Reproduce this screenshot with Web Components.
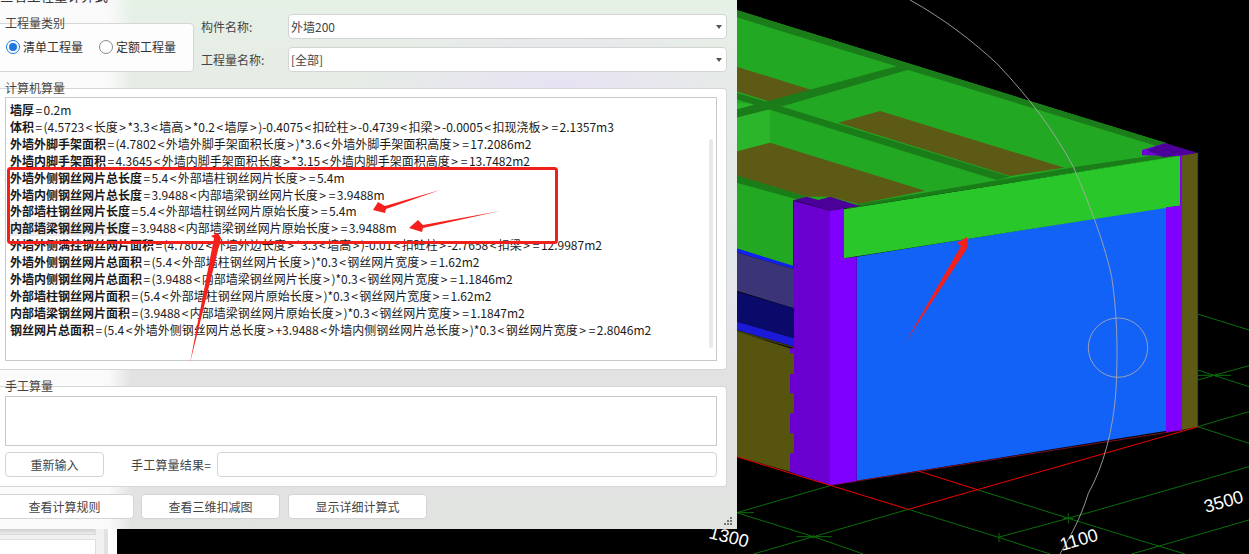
<!DOCTYPE html>
<html lang="zh-CN"><head><meta charset="utf-8"><title>工程量计算式</title>
<style>
html,body{margin:0;padding:0;background:#000}
body{width:1249px;height:554px;overflow:hidden;font:12px "Noto Sans CJK SC","Noto Sans",sans-serif;color:#222}
f-line b{font-weight:700}
f-line b.sel{background:#eeeeee}
f-line u{text-decoration:none;padding:0 1.45px}
</style></head><body>
<app-root>
  <back-panel slot="back"></back-panel>
  <model-scene slot="scene"></model-scene>
  <calc-dialog slot="dialog">
    <f-line><b>墙厚</b>=0.2m</f-line>
    <f-line><b>体积</b>=(4.5723&lt;长度&gt;*3.3&lt;墙高&gt;*0.2&lt;墙厚&gt;)-0.4075&lt;扣砼柱&gt;-0.4739&lt;扣梁&gt;-0.0005&lt;扣现浇板&gt;=2.1357m3</f-line>
    <f-line><b>外墙外脚手架面积</b>=(4.7802&lt;外墙外脚手架面积长度&gt;)*3.6&lt;外墙外脚手架面积高度&gt;=17.2086m2</f-line>
    <f-line><b>外墙内脚手架面积</b>=4.3645&lt;外墙内脚手架面积长度&gt;*3.15&lt;外墙内脚手架面积高度&gt;=13.7482m2</f-line>
    <f-line><b>外墙外侧钢丝网片总长度</b>=5.4&lt;外部墙柱钢丝网片长度&gt;=5.4m</f-line>
    <f-line><b>外墙内侧钢丝网片总长度</b>=3.9488&lt;内部墙梁钢丝网片长度&gt;=3.9488m</f-line>
    <f-line><b>外部墙柱钢丝网片长度</b>=5.4&lt;外部墙柱钢丝网片原始长度&gt;=5.4m</f-line>
    <f-line><b class="sel">内部墙梁钢丝网片长度</b>=3.9488&lt;内部墙梁钢丝网片原始长度&gt;=3.9488m</f-line>
    <f-line><b>外墙外侧满挂钢丝网片面积</b>=(4.7802&lt;外墙外边长度&gt;*3.3&lt;墙高&gt;)-0.01&lt;扣砼柱&gt;-2.7658&lt;扣梁&gt;=12.9987m2</f-line>
    <f-line><b>外墙外侧钢丝网片总面积</b>=(5.4&lt;外部墙柱钢丝网片长度&gt;)*0.3&lt;钢丝网片宽度&gt;=1.62m2</f-line>
    <f-line><b>外墙内侧钢丝网片总面积</b>=(3.9488&lt;内部墙梁钢丝网片长度&gt;)*0.3&lt;钢丝网片宽度&gt;=1.1846m2</f-line>
    <f-line><b>外部墙柱钢丝网片面积</b>=(5.4&lt;外部墙柱钢丝网片原始长度&gt;)*0.3&lt;钢丝网片宽度&gt;=1.62m2</f-line>
    <f-line><b>内部墙梁钢丝网片面积</b>=(3.9488&lt;内部墙梁钢丝网片原始长度&gt;)*0.3&lt;钢丝网片宽度&gt;=1.1847m2</f-line>
    <f-line><b>钢丝网片总面积</b>=(5.4&lt;外墙外侧钢丝网片总长度&gt;+3.9488&lt;外墙内侧钢丝网片总长度&gt;)*0.3&lt;钢丝网片宽度&gt;=2.8046m2</f-line>
  </calc-dialog>
  <red-marks slot="marks"></red-marks>
</app-root>
<script>
function def(name, css, html){
  customElements.define(name, class extends HTMLElement{
    constructor(){super();const r=this.attachShadow({mode:'open'});
      r.innerHTML='<style>'+css+'</style>'+(typeof html==='function'?html(this):html);}
  });
}
document.querySelectorAll('f-line').forEach(l=>{
  [...l.childNodes].filter(n=>n.nodeType===3).forEach(n=>{
    const f=document.createDocumentFragment();
    n.textContent.split(/([<>=])/).forEach(p=>{
      if(!p)return;
      if(/[<>=]/.test(p)){const u=document.createElement('u');u.textContent=p;f.appendChild(u);}
      else f.appendChild(document.createTextNode(p));
    });
    n.replaceWith(f);
  });
});
def('app-root',':host{display:block;position:relative;width:1249px;height:554px;overflow:hidden;background:#000}',
 '<slot name="back"></slot><slot name="scene"></slot><slot name="dialog"></slot><slot name="marks"></slot>');

def('back-panel',`:host{position:absolute;left:0;top:529px;width:117px;height:25px;background:#f1f1f1;display:flex;box-sizing:border-box}
 .l{width:96px;display:flex;flex-direction:column}
 .a{height:5px;border:solid #dadada;border-width:0 1px 1px 0;background:linear-gradient(#cfcfcf,#ececec)}
 .b{flex:1;margin-top:4px;background:#fff;border:solid #dedede;border-width:1px 1px 0 0}
 .g{width:8px}.s{width:4px;background:#e2e2e2}.e{flex:1;background:#fff}`,
 '<div class="l"><div class="a"></div><div class="b"></div></div><div class="g"></div><div class="s"></div><div class="e"></div>');

def('model-scene',':host{position:absolute;inset:0;display:block}svg{display:block}',`
<svg width="1249" height="554" viewBox="0 0 1249 554" xmlns="http://www.w3.org/2000/svg">
<g transform="translate(730 0) scale(.33333)">
 <polygon fill="#23a823" points="0,24 1310,430 1350,470 340,625 190,600 190,800 0,740"/>
 <polygon fill="#2bb52b" points="0,310 60,310 120,330 120,430 20,455 0,455"/>
 <polygon fill="#1a7d1a" points="0,24 1310,430 1280,438 0,46"/>
 <polygon fill="#5c5a14" points="0,194 245,270 120,305 0,268"/>
 <polygon fill="#1a7d1a" points="0,334 505,197 540,208 160,318 0,358"/>
 <polygon fill="#1a7d1a" points="0,272 840,530 800,540 0,292"/>
 <polygon fill="#5c5a14" points="325,368 450,333 1003,503 840,528"/>
 <polygon fill="#5c5a14" points="0,460 120,428 585,572 385,612 300,590 230,590 0,522"/>
 <polygon fill="#1a7d1a" points="0,520 230,590 200,598 0,543"/>
 <polygon fill="#1a7d1a" points="385,612 1040,500 1300,462 1350,467 345,627"/>
 <polygon fill="#1020f0" points="0,739 192,798 192,808 0,751"/>
 <polygon fill="#3b3578" points="0,751 192,808 192,925 0,866"/>
 <polygon fill="#0a0a6a" points="0,869 192,925 192,1015 0,959"/>
 <polygon fill="#1a1ad8" points="0,959 192,1015 192,1040 0,984"/>
 <polygon fill="#3e3c0c" points="0,984 192,1040 192,1045 0,990"/>
 <polygon fill="#1262f8" points="380,770 1310,620 1310,1292 380,1442"/>
 <line x1="300" y1="1456" x2="1356" y2="1290" stroke="#7a0f24" stroke-width="3"/>
 <polygon fill="#6a00d0" points="192,602 300,632 300,1456 180,1416 180,1045 192,1045"/>
 <polygon fill="#7f00ff" points="300,632 342,625 342,775 380,770 380,1443 300,1456"/>
 <polygon fill="#4b0099" points="192,600 230,590 265,600 300,590 390,618 300,632"/>
 <polygon fill="#56540f" points="0,988 180,1045 180,1060 192,1060 192,1122 180,1122 180,1180 192,1180 192,1240 180,1240 180,1300 192,1300 192,1360 180,1360 180,1415 0,1364"/>
 <polygon fill="#29c729" points="342,628 1350,468 1350,617 342,775"/>
 <polygon fill="#7f00ff" points="1308,622 1350,617 1350,468 1356,466 1356,1290 1308,1297"/>
 <polygon fill="#5c5a14" points="1356,466 1403,458 1403,1280 1356,1290"/>
 <polygon fill="#6a00d0" points="1236,450 1305,430 1400,458 1350,468 1236,466"/>
 <polygon fill="#4b0099" points="1250,450 1305,430 1400,458 1300,472"/>
 <line x1="1403" y1="458" x2="1403" y2="1280" stroke="#1a50c0" stroke-width="2"/>
 <g transform="translate(0 810)" fill="none" stroke="#0a6e0a" stroke-width="3">
  <path d="M0,734 L300,647"/><path d="M20,728 L250,800 L400,852"/>
  <path d="M70,852 L535,718"/><path d="M745,660 L1015,745 L1285,828 L1365,852"/>
  <path d="M535,718 L805,802 L960,852"/><path d="M805,802 L1015,745 L1557,590"/>
  <path d="M1205,852 L1557,750"/><path d="M1403,470 L1557,425"/><path d="M1403,470 L1557,520"/>
  <path d="M1403,132 L1557,180"/><path d="M1403,300 L1557,350"/><path d="M1403,330 L1557,287"/>
  <path d="M200,800 H305 M250,794 V806 M20,728 H72 M807,788 V816 M1015,730 V760 M1000,745 H1030 M1403,316 H1503 M1458,310 V322"/>
  <g stroke="#ee0000" stroke-width="3">
   <path d="M0,554 L535,718 L1405,470"/><path d="M565,603 L745,660"/>
  </g>
 </g>
 <path fill="none" stroke="#aaaaaa" stroke-width="2.6" d="M540,0 C640,55 730,125 800,190 C900,295 970,390 1030,500 C1090,640 1125,740 1145,830 C1160,930 1165,1040 1158,1170 C1150,1290 1120,1400 1075,1480 C1050,1560 1020,1610 990,1662"/>
 <circle cx="1164" cy="1043" r="89" fill="none" stroke="#aaaaaa" stroke-width="2.6"/>
</g>
<g fill="#fff" font-family="'Liberation Sans',sans-serif" font-size="18">
 <text transform="translate(1206 513) rotate(-16)">3500</text>
 <text transform="translate(1062 551) rotate(-16)">1100</text>
 <text transform="translate(708 538) rotate(14)">1300</text>
</g>
</svg>`);

def('x-group',`:host{display:block;position:relative;box-sizing:border-box;background:#fff;border:1px solid #d6d6d6;border-radius:0 4px 4px 0}
 .lg{position:absolute;left:var(--lg,8px);top:-9px;line-height:16px;color:#444;white-space:nowrap}`,
 h=>`<span class="lg">${h.getAttribute('legend')}</span><slot></slot>`);

def('x-combo',`:host{display:flex;align-items:center;box-sizing:border-box;height:25px;background:#fff;border:1px solid #d4d4d4;border-radius:4px;padding:0 4px 0 2px;color:#444}
 span{flex:1;white-space:nowrap}i{width:0;height:0;border:3.5px solid transparent;border-top:4px solid #555;border-bottom:0}`,
 '<span><slot></slot></span><i></i>');

def('x-btn',`:host{display:flex;align-items:center;justify-content:center;box-sizing:border-box;height:25px;background:#fff;border:1px solid #d4d4d4;border-radius:4px;color:#444;white-space:nowrap}`,
 '<slot></slot>');

def('x-radio',`:host{display:inline-flex;align-items:center;gap:3px;white-space:nowrap;color:#333}
 i{box-sizing:border-box;width:14px;height:14px;border-radius:50%;border:1px solid #8a8a8a;background:#fff;display:flex;align-items:center;justify-content:center}
 :host([on]) i::after{content:"";width:8px;height:8px;border-radius:50%;background:#1f78e0}
 :host([on]) i{border-color:#1f78e0}`,'<i></i><slot></slot>');

def('f-line',':host{display:block;height:16.92px;line-height:17px;white-space:nowrap;color:#1a1a1a}','<slot></slot>');

def('calc-dialog',`:host{position:absolute;left:0;top:0;width:737px;height:529px;display:flex;flex-direction:column;overflow:hidden;
   background:
    linear-gradient(to right,#fbfbfb 0,#fafafa 108px,rgba(250,250,250,0) 132px),
    radial-gradient(200px 70px at 560px 85px,#e7e2f3 0,rgba(231,226,243,0) 100%),
    linear-gradient(#e6f1e6,#e6ece6 80px,#e4e6ea 300px,#e2e2e2 370px,#e1e3e1)}
 .title{height:3px;overflow:hidden;display:flex;align-items:flex-end;line-height:16px;font-size:13.5px;color:#333;white-space:nowrap;flex:none}
 .title span{margin-bottom:0}
 .top{display:flex;height:57px;margin-top:11px;flex:none}
 .kind{margin:9px 0 0 -4px;width:198px;height:49px;flex:none;background:#fdfdfd;display:flex;align-items:center;gap:16px;padding:0 0 2px 9px}
 .fields{margin-left:7px;flex:none;width:526px;display:flex;flex-direction:column;gap:8px}
 .fr{display:flex;align-items:center;height:25px;color:#444}
 .fr label{width:87px;flex:none;white-space:nowrap}
 .fr x-combo{width:439px}
 .calc,.man{--lg:9px}
 .calc{margin:17px 0 0 -4px;width:731px;height:282px;flex:none;border-top-right-radius:4px;padding:8px 9px 9px 9px;border-width:1px 1px 1px 0}
 .box{position:relative;box-sizing:border-box;width:712px;height:264px;background:#fff;border:1px solid #c9c9c9;padding:3px 0 0 4px}
 .bar{position:absolute;right:3px;top:41px;bottom:12px;width:4px;background:#e9e9e9;border-radius:2px}
 .man{margin:16px 0 0 -4px;width:731px;height:101px;flex:none;padding:9px 9px 0 9px;border-width:1px 1px 1px 0}
 .ta{box-sizing:border-box;width:712px;height:50px;background:#fff;border:1px solid #c9c9c9}
 .row{display:flex;align-items:center;margin-top:6px;height:25px}
 .row x-btn{width:99px}
 .row span{margin-left:27px;width:86px;color:#444;white-space:nowrap;letter-spacing:.2px}
 .inp{box-sizing:border-box;width:500px;height:25px;background:#fff;border:1px solid #d4d4d4;border-radius:4px}
 .foot{display:flex;gap:7px;margin:7px 0 0 -5px;flex:none}
 .foot x-btn:nth-child(1){width:139px}.foot x-btn:nth-child(2){width:139px}.foot x-btn:nth-child(3){width:139px;margin-left:1px}
 .grip{position:absolute;right:4px;bottom:3px}`,
 `<div class="title"><span>查看工程量计算式</span></div>
  <div class="top">
   <x-group class="kind" legend="工程量类别"><x-radio on>清单工程量</x-radio><x-radio>定额工程量</x-radio></x-group>
   <div class="fields">
    <div class="fr"><label>构件名称:</label><x-combo>外墙200</x-combo></div>
    <div class="fr"><label>工程量名称:</label><x-combo>[全部]</x-combo></div>
   </div>
  </div>
  <x-group class="calc" legend="计算机算量"><div class="box"><slot></slot><div class="bar"></div></div></x-group>
  <x-group class="man" legend="手工算量">
   <div class="ta"></div>
   <div class="row"><x-btn>重新输入</x-btn><span>手工算量结果=</span><div class="inp"></div></div>
  </x-group>
  <div class="foot"><x-btn>查看计算规则</x-btn><x-btn>查看三维扣减图</x-btn><x-btn>显示详细计算式</x-btn></div>
  <svg class="grip" width="9" height="9" fill="#777"><rect x="6" y="0" width="2" height="2"/><rect x="3" y="3" width="2" height="2"/><rect x="6" y="3" width="2" height="2"/><rect x="0" y="6" width="2" height="2"/><rect x="3" y="6" width="2" height="2"/><rect x="6" y="6" width="2" height="2"/></svg>`);

def('red-marks',':host{position:absolute;inset:0;display:block;pointer-events:none}svg{display:block}',`
<svg width="1249" height="554" viewBox="0 0 1249 554" xmlns="http://www.w3.org/2000/svg">
 <rect x="8.5" y="168.5" width="548" height="74" rx="2" fill="none" stroke="#f0201c" stroke-width="3"/>
 <g fill="#f5201c">
  <polygon points="440,190 385,206 378,202 373,210 385,213 386,209"/>
  <polygon points="500,211 423,225 418,220 409,228 422,232 423,228"/>
  <polygon points="218,233 211,236 214,238 190,363 221,238"/>
  <polygon points="967,237 957,243 961,246 905,343 966,250 967,248"/>
 </g>
</svg>`);
</script>
</body></html>
